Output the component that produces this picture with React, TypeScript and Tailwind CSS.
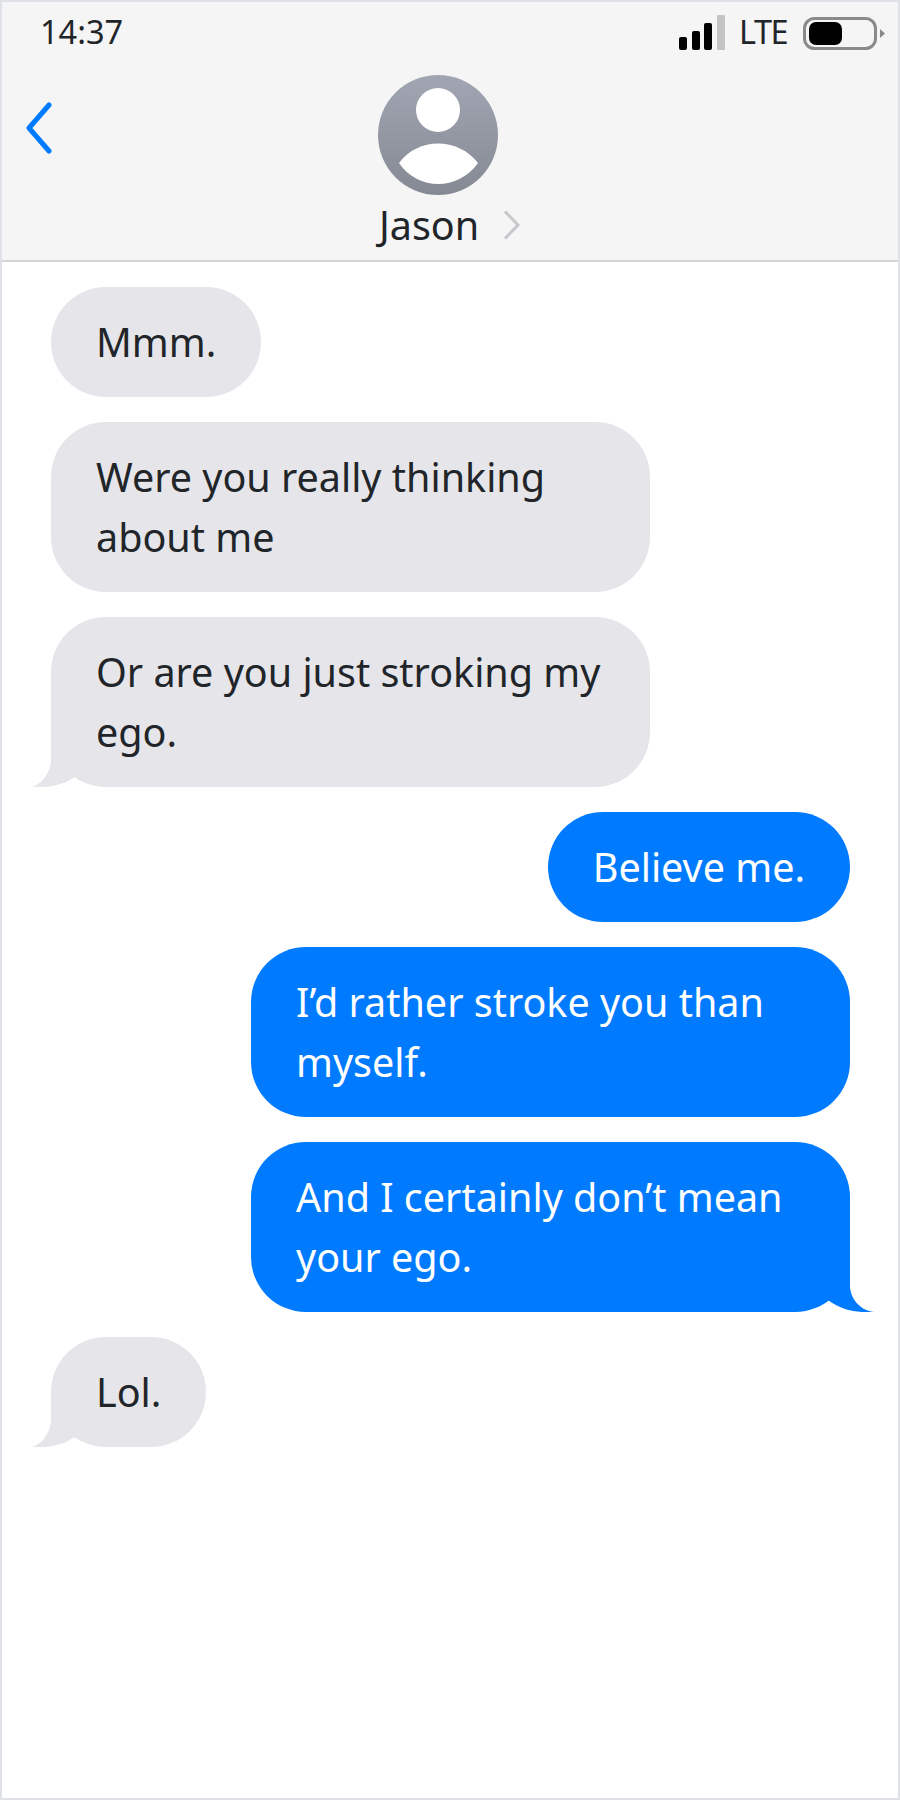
import React from "react";

type Message = { id: number; text: string; mine?: boolean; tail?: boolean };

const messages: Message[] = [
  { id: 1, text: "Mmm." },
  { id: 2, text: "Were you really thinking about me" },
  { id: 3, text: "Or are you just stroking my ego.", tail: true },
  { id: 4, text: "Believe me.", mine: true },
  { id: 5, text: "I’d rather stroke you than myself.", mine: true },
  { id: 6, text: "And I certainly don’t mean your ego.", mine: true, tail: true },
  { id: 7, text: "Lol.", tail: true },
];

function Bubble({ text, mine, tail }: Message) {
  return (
    <div
      className={
        mine
          ? "relative self-end w-fit max-w-[599px] rounded-[55px] bg-[#007bff] px-[45px] py-[25px] text-white"
          : "relative self-start w-fit max-w-[599px] rounded-[55px] bg-[#e5e5ea] px-[45px] py-[25px] text-[#212529]"
      }
    >
      {text}
      {tail && !mine && (
        <svg className="absolute left-[-20px] bottom-0 h-[57px] w-[45px]" viewBox="0 0 45 57">
          <path d="M20 0 L20 32 C18 45 10 55 0 57 C15 58 32 56 45 46 L45 0 Z" fill="#e5e5ea" />
        </svg>
      )}
      {tail && mine && (
        <svg className="absolute right-[-25px] bottom-0 h-[57px] w-[59px]" viewBox="0 0 59 57">
          <path d="M34 0 L34 32 C35 45 45 56 59 57 C44 58 26 56 12 45 L12 0 Z" fill="#007bff" />
        </svg>
      )}
    </div>
  );
}

export default function App() {
  return (
    <div
      className="h-[1800px] w-[900px] border-2 border-[#dee2e6] bg-white text-[39.5px] leading-[60px] text-[#212529]"
      style={{ fontFamily: '"Noto Sans", "Open Sans", sans-serif' }}
    >
      <header className="h-[260px] border-b-2 border-[#d6d6d6] bg-[#f5f5f5]">
        {/* status bar */}
        <div className="flex h-[60px] items-center justify-between pl-[38px] pr-[11px] text-[32.5px]">
          <span>14:37</span>
          <div className="flex items-center">
            <svg width="46" height="36" viewBox="0 0 46 36" className="mr-[14px]">
              <rect x="0" y="23" width="8" height="13" rx="2" fill="#000" />
              <rect x="13" y="17" width="8" height="19" rx="2" fill="#000" />
              <rect x="25" y="9" width="8" height="27" rx="2" fill="#000" />
              <rect x="38" y="1" width="8" height="35" rx="1" fill="#c4c4c4" />
            </svg>
            <span className="w-[47px] tracking-[-1.5px]">LTE</span>
            <svg width="84" height="36" viewBox="0 0 84 36" className="ml-[17px]">
              <rect x="1.5" y="4.5" width="71" height="30" rx="10" fill="none" stroke="#8a8a8a" strokeWidth="3" />
              <rect x="6" y="8" width="33" height="23" rx="7" fill="#000" />
              <path d="M77 15 L82 19.5 L77 24 Z" fill="#8a8a8a" />
            </svg>
          </div>
        </div>

        {/* contact */}
        <div className="flex">
          <svg width="30" height="52" viewBox="0 0 30 52" className="ml-[23px] mt-[40px]">
            <path d="M24 3 L4 26 L24 49" fill="none" stroke="#007bff" strokeWidth="5" strokeLinecap="round" strokeLinejoin="round" />
          </svg>
          <div className="ml-[323px] flex flex-col items-start pt-[13px]">
            <svg width="120" height="120" viewBox="0 0 120 120">
              <defs>
                <linearGradient id="avatarBg" x1="0" y1="0" x2="0" y2="1">
                  <stop offset="0" stopColor="#a2a6b2" />
                  <stop offset="1" stopColor="#858994" />
                </linearGradient>
              </defs>
              <circle cx="60" cy="60" r="60" fill="url(#avatarBg)" />
              <circle cx="60" cy="35" r="22" fill="#fff" />
              <path d="M21 88 C40 62 80 62 100 88 C80 116 40 116 21 88 Z" fill="#fff" />
            </svg>
            <div className="flex h-[59px] items-center gap-[24px] pl-[1px] leading-[58px]">
              <span>Jason</span>
              <svg width="18" height="30" viewBox="0 0 18 30">
                <path d="M2 1.5 L15 15 L2 28.5" fill="none" stroke="#c7c7cc" strokeWidth="3" />
              </svg>
            </div>
          </div>
        </div>
      </header>

      <main className="flex flex-col gap-[25px] pl-[49px] pr-[48px] pt-[25px]">
        {messages.map((m) => (
          <Bubble key={m.id} {...m} />
        ))}
      </main>
    </div>
  );
}
